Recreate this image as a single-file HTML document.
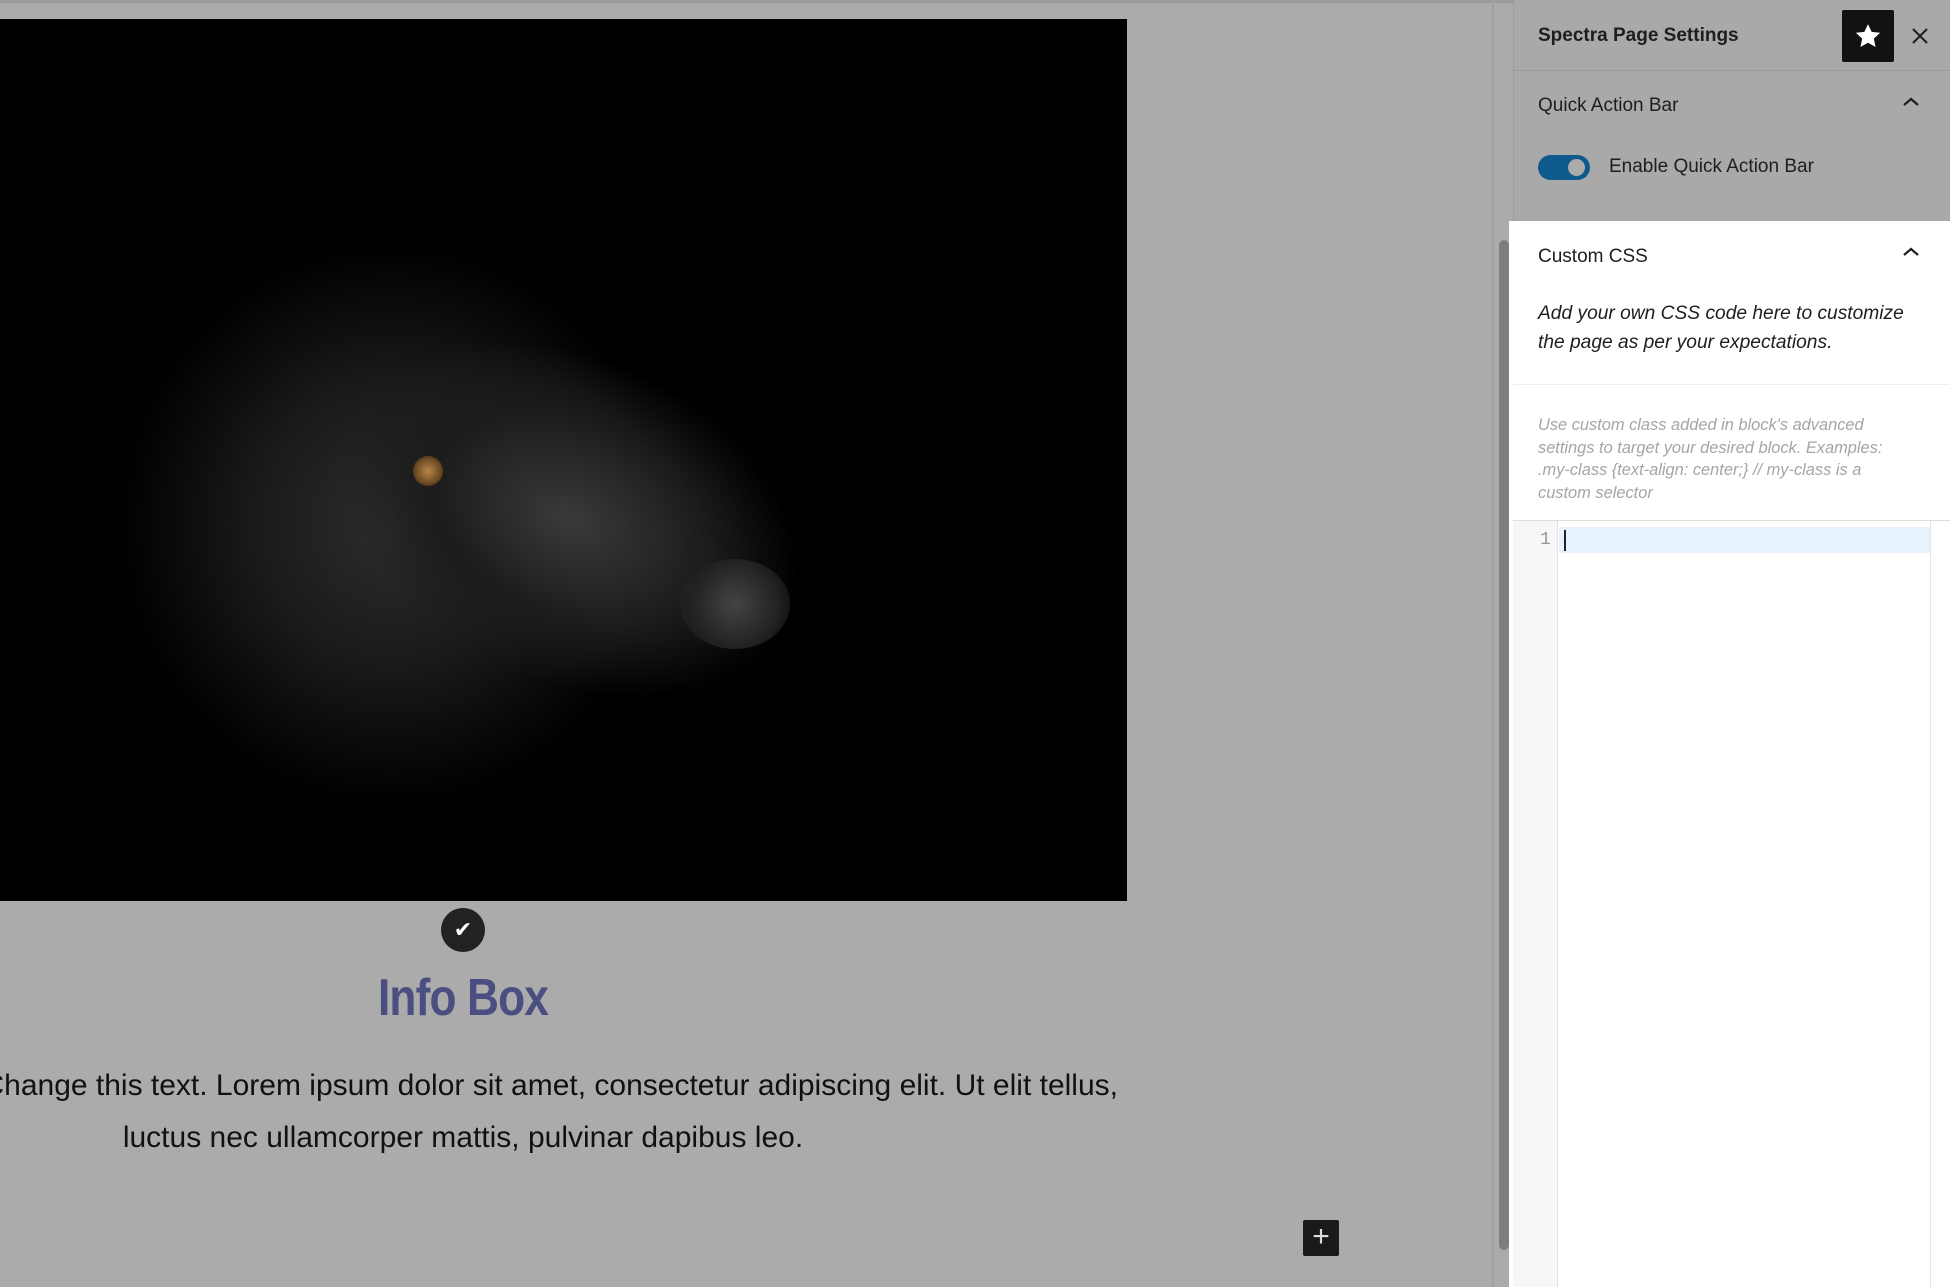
<!DOCTYPE html>
<html><head><meta charset="utf-8"><style>
*{margin:0;padding:0;box-sizing:border-box}
body{width:1950px;height:1287px;background:#ababab;position:relative;overflow:hidden;font-family:"Liberation Sans",sans-serif}
.abs{position:absolute}
</style></head><body>
<div class="abs" style="left:0;top:0;width:1950px;height:3px;background:#9a9a9a"></div>
<!-- image -->
<div class="abs" style="left:0;top:19px;width:1127px;height:882px;background:#000;overflow:hidden">
  <div class="abs" style="left:90px;top:190px;width:600px;height:700px;background:radial-gradient(ellipse 45% 40% at 50% 45%,#2c2c2c 0%,#1a1a1a 50%,rgba(0,0,0,0) 100%)"></div>
  <div class="abs" style="left:330px;top:320px;width:480px;height:360px;transform:rotate(25deg);background:radial-gradient(ellipse 50% 45% at 50% 50%,#3a3a3a 0%,#1c1c1c 60%,rgba(0,0,0,0) 100%)"></div>
  <div class="abs" style="left:680px;top:540px;width:110px;height:90px;border-radius:50%;background:radial-gradient(circle,#444 0%,#222 60%,rgba(0,0,0,0) 100%)"></div>
  <div class="abs" style="left:413px;top:437px;width:30px;height:30px;border-radius:50%;background:radial-gradient(circle,#b8864a 0%,#6b4a22 60%,#111 100%)"></div>
</div>
<div class="abs" style="left:441px;top:908px;width:44px;height:44px;border-radius:50%;background:#222;color:#fff;text-align:center;line-height:44px;font-size:22px">✔</div>
<div class="abs" style="left:263px;top:968px;width:400px;text-align:center;font-family:'Liberation Sans Narrow','Liberation Sans',sans-serif;font-weight:bold;font-size:52px;color:#4a4e80;letter-spacing:-1px;transform:scaleX(0.85)">Info Box</div>
<div class="abs" style="left:0;top:1060px;width:1400px;height:120px;overflow:hidden">
  <div class="abs" style="right:282px;top:0;white-space:nowrap;font-size:30px;color:#111;line-height:52px">Change this text. Lorem ipsum dolor sit amet, consectetur adipiscing elit. Ut elit tellus,</div>
  <div class="abs" style="left:63px;top:52px;width:800px;text-align:center;white-space:nowrap;font-size:30px;color:#111;line-height:52px">luctus nec ullamcorper mattis, pulvinar dapibus leo.</div>
</div>
<div class="abs" style="left:1303px;top:1220px;width:36px;height:36px;background:#1a1a1a;border-radius:2px;color:#ddd;text-align:center;line-height:34px;font-size:30px">+</div>
<!-- divider and scrollbar -->
<div class="abs" style="left:1492px;top:0;width:2px;height:1287px;background:#a0a0a0"></div>
<div class="abs" style="left:1499px;top:240px;width:10px;height:1010px;border-radius:5px;background:#7d7d7d"></div>
<!-- sidebar -->
<div class="abs" style="left:1513px;top:0;width:437px;height:221px;background:#a9a9a9;border-left:1px solid #9c9c9c"></div>
<div class="abs" style="left:1513px;top:70px;width:437px;height:1px;background:#999"></div>
<div class="abs" style="left:1538px;top:25px;font-size:19px;font-weight:bold;color:#1e1e1e">Spectra Page Settings</div>
<div class="abs" style="left:1842px;top:10px;width:52px;height:52px;background:#111;border-radius:2px"><svg width="52" height="52" viewBox="0 0 24 24"><path d="M12 6.5l1.7 3.6 3.9.4-2.9 2.7.8 3.9L12 15.1l-3.5 2 .8-3.9-2.9-2.7 3.9-.4z" fill="#fff"/></svg></div>
<svg class="abs" style="left:1910px;top:26px" width="20" height="20" viewBox="0 0 20 20"><path d="M3 3l14 14M17 3L3 17" stroke="#1e1e1e" stroke-width="2"/></svg>
<div class="abs" style="left:1538px;top:95px;font-size:19px;color:#1e1e1e">Quick Action Bar</div>
<svg class="abs" style="left:1900px;top:95px" width="22" height="14" viewBox="0 0 22 14"><path d="M4 10l7-6 7 6" stroke="#1e1e1e" stroke-width="2.2" fill="none"/></svg>
<div class="abs" style="left:1538px;top:155px;width:52px;height:25px;border-radius:13px;background:#0f5a8c"></div>
<div class="abs" style="left:1568px;top:159px;width:17px;height:17px;border-radius:50%;background:#ababab"></div>
<div class="abs" style="left:1609px;top:156px;font-size:19px;color:#1e1e1e">Enable Quick Action Bar</div>
<!-- white panel -->
<div class="abs" style="left:1509px;top:221px;width:441px;height:1066px;background:#fff"></div>
<div class="abs" style="left:1538px;top:246px;font-size:19px;color:#1e1e1e">Custom CSS</div>
<svg class="abs" style="left:1900px;top:245px" width="22" height="14" viewBox="0 0 22 14"><path d="M4 10l7-6 7 6" stroke="#1e1e1e" stroke-width="2.2" fill="none"/></svg>
<div class="abs" style="left:1538px;top:299px;font-size:19.2px;font-style:italic;color:#1e1e1e;line-height:29px">Add your own CSS code here to customize<br>the page as per your expectations.</div>
<div class="abs" style="left:1513px;top:384px;width:437px;height:1px;background:#eee"></div>
<div class="abs" style="left:1538px;top:414px;font-size:16.4px;font-style:italic;color:#a5a5a5;line-height:22.7px">Use custom class added in block's advanced<br>settings to target your desired block. Examples:<br>.my-class {text-align: center;} // my-class is a<br>custom selector</div>
<div class="abs" style="left:1513px;top:520px;width:437px;height:1px;background:#ddd"></div>
<div class="abs" style="left:1513px;top:521px;width:45px;height:766px;background:#f7f7f7;border-right:1px solid #e4e4e4"></div>
<div class="abs" style="left:1540px;top:530px;font-family:'Liberation Mono',monospace;font-size:18px;color:#999">1</div>
<div class="abs" style="left:1559px;top:527px;width:371px;height:26px;background:#e8f2fe"></div>
<div class="abs" style="left:1564px;top:530px;width:2px;height:21px;background:#222"></div>
<div class="abs" style="left:1930px;top:521px;width:1px;height:766px;background:#e4e4e4"></div>
</body></html>
